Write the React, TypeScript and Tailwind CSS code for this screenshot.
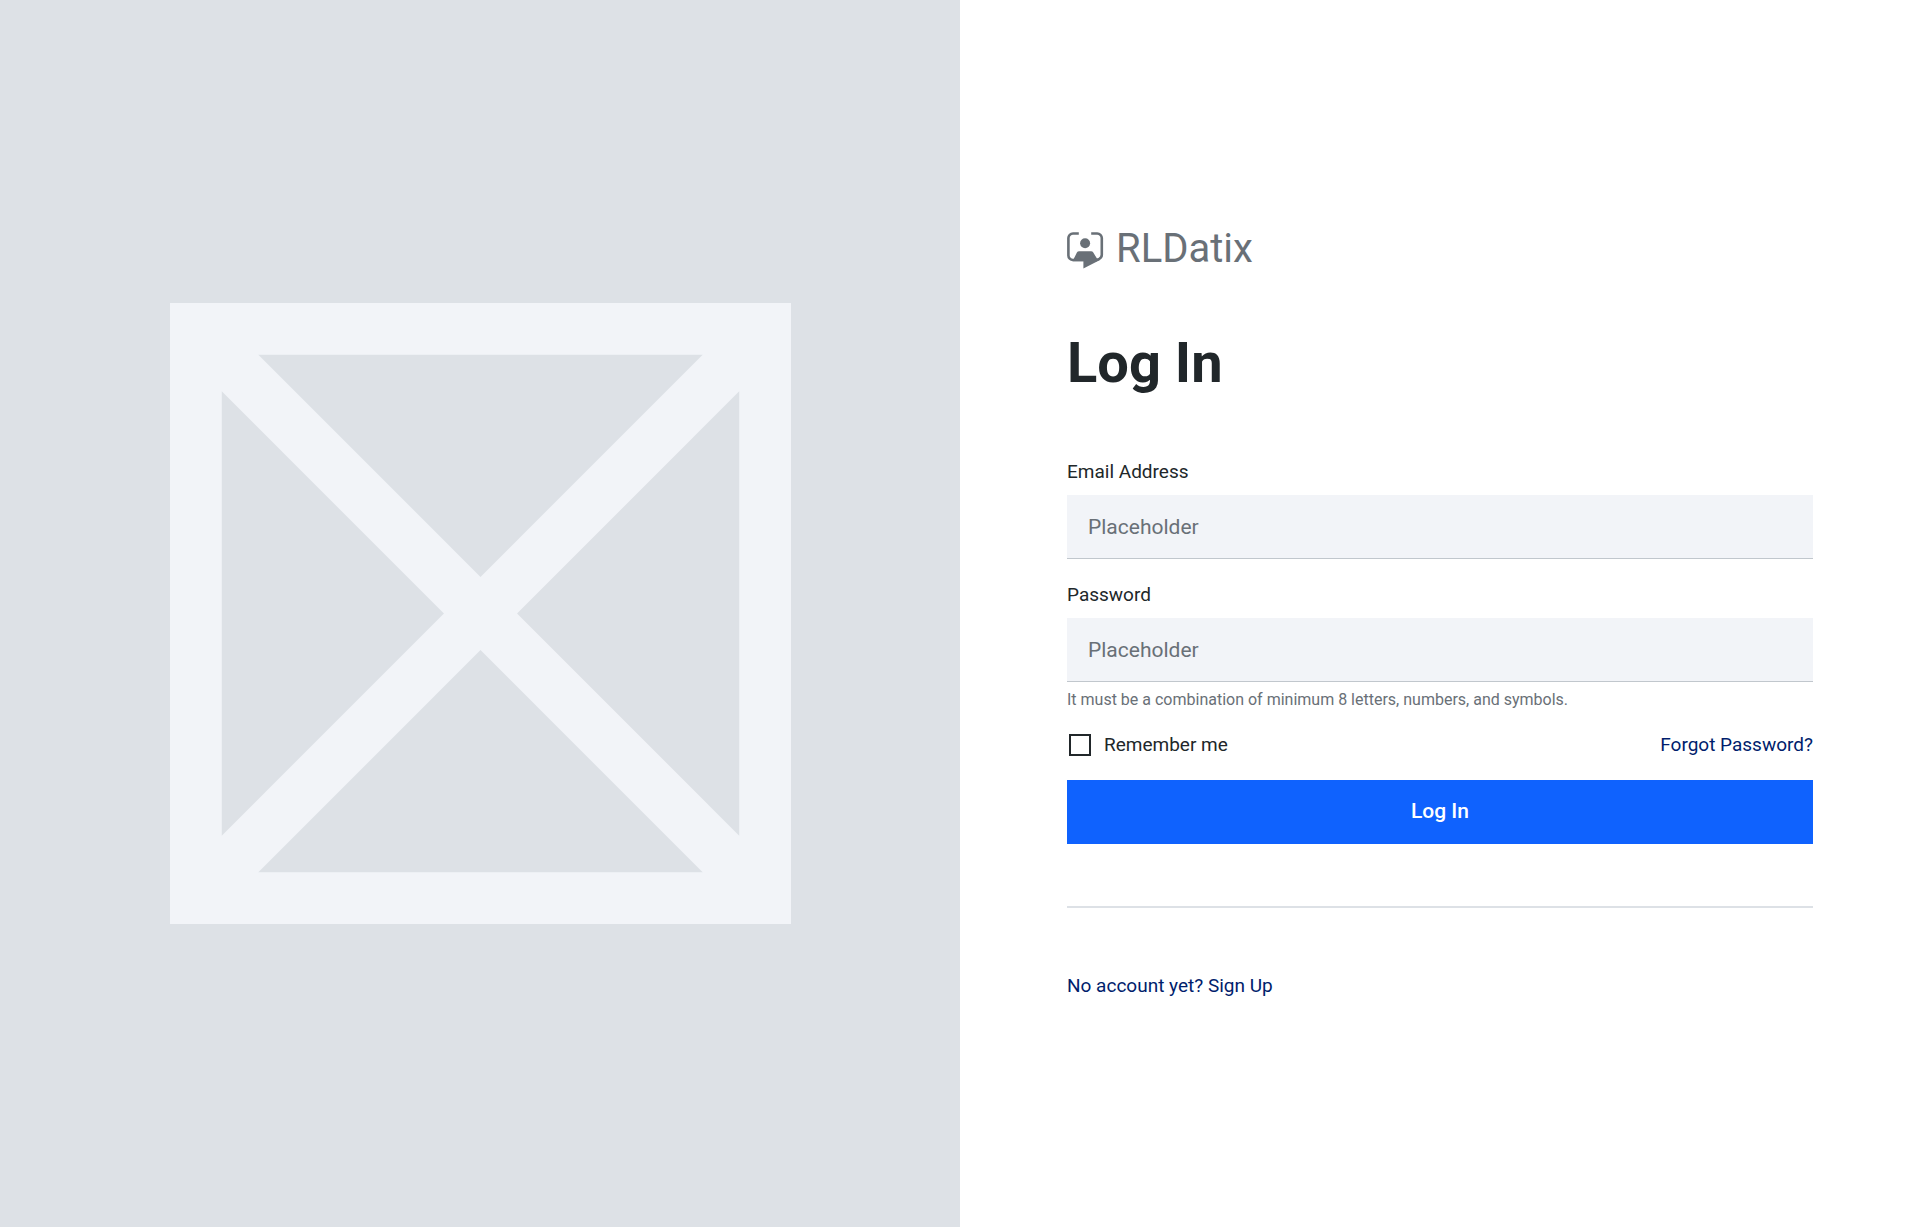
import React, { useState } from 'react';

const PlaceholderImage: React.FC = () => (
  <svg viewBox="0 0 24 24" className="w-[65%] max-w-[621px]" aria-hidden="true">
    <rect width="24" height="24" fill="#f2f4f8" />
    <g fill="#dde1e6">
      <path d="M3.414 2H20.586L12 10.586Z" />
      <path d="M3.414 22H20.586L12 13.414Z" />
      <path d="M2 3.414V20.586L10.586 12Z" />
      <path d="M22 3.414V20.586L13.414 12Z" />
    </g>
  </svg>
);

const Logo: React.FC = () => (
  <div className="flex items-end gap-3 text-[#697077]">
    <svg width="37" height="37" viewBox="0 0 37 37" fill="none" aria-hidden="true">
      <path
        d="M11.8 1.5H6A4.6 4.6 0 0 0 1.4 6.1V23.4A4.6 4.6 0 0 0 6 28H17M24.2 1.5H30.2A4.6 4.6 0 0 1 34.8 6.1V22.6A4.6 4.6 0 0 1 32.2 26.9L28 28.6"
        stroke="currentColor"
        strokeWidth="2.6"
      />
      <circle cx="18.1" cy="11.2" r="5" fill="currentColor" />
      <path
        d="M12.2 19.2H24Q25.6 19.2 26.3 20.6L30.6 27.6L33 28L16.4 36.4V29.3H5.5L9.9 20.6Q10.6 19.2 12.2 19.2Z"
        fill="currentColor"
      />
    </svg>
    <span className="text-[40px] leading-10">RLDatix</span>
  </div>
);

interface FieldProps {
  id: string;
  label: string;
  type: string;
  value: string;
  onChange: (value: string) => void;
}

const Field: React.FC<FieldProps> = ({ id, label, type, value, onChange }) => (
  <div className="flex flex-col gap-[11px]">
    <label htmlFor={id} className="text-[19px] leading-6">
      {label}
    </label>
    <input
      id={id}
      type={type}
      value={value}
      placeholder="Placeholder"
      onChange={(e) => onChange(e.target.value)}
      className="w-full h-16 px-[21px] text-[21px] bg-[#f2f4f8] border-b border-[#c1c7cd] placeholder:text-[#697077] outline-none focus:border-[#0f62fe]"
    />
  </div>
);

const App: React.FC = () => {
  const [email, setEmail] = useState('');
  const [password, setPassword] = useState('');
  const [remember, setRemember] = useState(false);

  return (
    <div className="flex min-h-screen bg-white font-[Roboto,sans-serif] text-[#21272a]">
      <div className="flex items-center justify-center w-1/2 bg-[#dde1e6]">
        <PlaceholderImage />
      </div>
      <main className="flex flex-col justify-center w-1/2 px-[107px]">
        <Logo />
        <h1 className="mt-[63px] text-[56px] leading-[62px] font-bold">Log In</h1>
        <form className="flex flex-col mt-[66px]" onSubmit={(e) => e.preventDefault()}>
          <div className="flex flex-col gap-6">
            <Field id="email" label="Email Address" type="email" value={email} onChange={setEmail} />
            <Field id="password" label="Password" type="password" value={password} onChange={setPassword} />
          </div>
          <p className="mt-1.5 text-base leading-6 text-[#697077]">
            It must be a combination of minimum 8 letters, numbers, and symbols.
          </p>
          <div className="flex items-center justify-between mt-[21px] text-[19px] leading-6">
            <label className="flex items-center gap-[13px]">
              <input
                type="checkbox"
                checked={remember}
                onChange={(e) => setRemember(e.target.checked)}
                className="appearance-none size-[22px] ml-0.5 border-2 border-[#21272a] checked:bg-[#0f62fe]"
              />
              Remember me
            </label>
            <a href="#forgot" className="text-[#001d6c]">
              Forgot Password?
            </a>
          </div>
          <button type="submit" className="h-16 mt-[23px] text-[21px] font-medium text-white bg-[#0f62fe]">
            Log In
          </button>
        </form>
        <hr className="mt-[62px] border-t-2 border-[#dde1e6]" />
        <a href="#signup" className="self-start mt-[66px] text-[19px] leading-6 text-[#001d6c]">
          No account yet? Sign Up
        </a>
      </main>
    </div>
  );
};

export default App;
